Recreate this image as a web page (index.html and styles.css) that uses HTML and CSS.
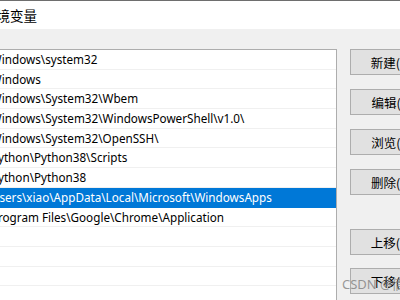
FILE: index.html
```html
<!DOCTYPE html>
<html lang="zh-CN">
<head>
    <meta charset="UTF-8">
    <title>编辑环境变量</title>
    <link rel="stylesheet" href="styles.css">
</head>
<body>
    <div class="dialog">
        <div class="titlebar">
            <span class="title">编辑环境变量</span>
        </div>
        <div class="content">
            <div class="path-list">
                <div class="row">C:\Windows\system32</div>
                <div class="row">C:\Windows</div>
                <div class="row">C:\Windows\System32\Wbem</div>
                <div class="row">C:\Windows\System32\WindowsPowerShell\v1.0\</div>
                <div class="row">C:\Windows\System32\OpenSSH\</div>
                <div class="row">C:\Python\Python38\Scripts</div>
                <div class="row">C:\Python\Python38</div>
                <div class="row selected">C:\Users\xiao\AppData\Local\Microsoft\WindowsApps</div>
                <div class="row">C:\Program Files\Google\Chrome\Application</div>
                <div class="row"></div>
                <div class="row"></div>
                <div class="row"></div>
                <div class="row"></div>
            </div>
            <div class="buttons">
                <button class="btn">新建(N)</button>
                <button class="btn">编辑(E)</button>
                <button class="btn">浏览(B)</button>
                <button class="btn">删除(D)</button>
                <button class="btn btn-up">上移(U)</button>
                <button class="btn btn-down">下移(O)</button>
            </div>
        </div>
    </div>
    <div class="watermark">CSDN @倩倩小白</div>
</body>
</html>
```

FILE: styles.css
```css
body {
    margin: 0;
    width: 400px;
    height: 300px;
    overflow: hidden;
    position: relative;
    font-family: "Noto Sans", "Noto Sans CJK SC", sans-serif;
    font-size: 11.7px;
    color: #000;
    background-color: #f0f0f0;
}

.dialog {
    border-top: 1px solid #6e6e6e;
    height: 299px;
    display: flex;
    flex-direction: column;
    overflow: hidden;
}

/* 标题栏 (左边被截掉了一部分) */
.titlebar {
    height: 28px;
    flex-shrink: 0;
    background-color: #fff;
    display: flex;
    align-items: center;
}

.title {
    margin-left: -44px;
    font-size: 13.5px;
    font-family: "Noto Sans CJK SC", sans-serif;
}

.content {
    flex: 1;
    display: flex;
    align-items: flex-start;
    padding-top: 20px;
    overflow: hidden;
}

/* 路径列表 */
.path-list {
    margin-left: -40px;
    width: 375px;
    height: 260px;
    background-color: #fff;
    border: 1px solid #adadad;
    border-bottom: none;
    overflow: hidden;
    flex-shrink: 0;
}

.row {
    box-sizing: border-box;
    height: 19.7px;
    line-height: 18.7px;
    padding-left: 15px;
    border-bottom: 1px solid #f0f0f0;
    white-space: nowrap;
}

.row.selected {
    background-color: #0078d7;
    border-bottom-color: #0078d7;
    color: #fff;
}

/* 右侧按钮 */
.buttons {
    margin-left: 13px;
    display: flex;
    flex-direction: column;
    gap: 14px;
    flex-shrink: 0;
}

.btn {
    width: 84px;
    height: 26px;
    padding: 0;
    background-color: #e1e1e1;
    border: 1px solid #adadad;
    border-radius: 0;
    font-family: "Noto Sans CJK SC", sans-serif;
    font-size: 12.5px;
    color: #000;
}

.btn-up {
    margin-top: 20px;
}

.btn-down {
    margin-top: -1px;
}

.watermark {
    position: absolute;
    left: 342px;
    top: 274px;
    font-family: "Noto Sans", "Noto Sans CJK SC", sans-serif;
    font-size: 13px;
    color: rgba(120, 120, 120, 0.75);
    white-space: nowrap;
}
```
